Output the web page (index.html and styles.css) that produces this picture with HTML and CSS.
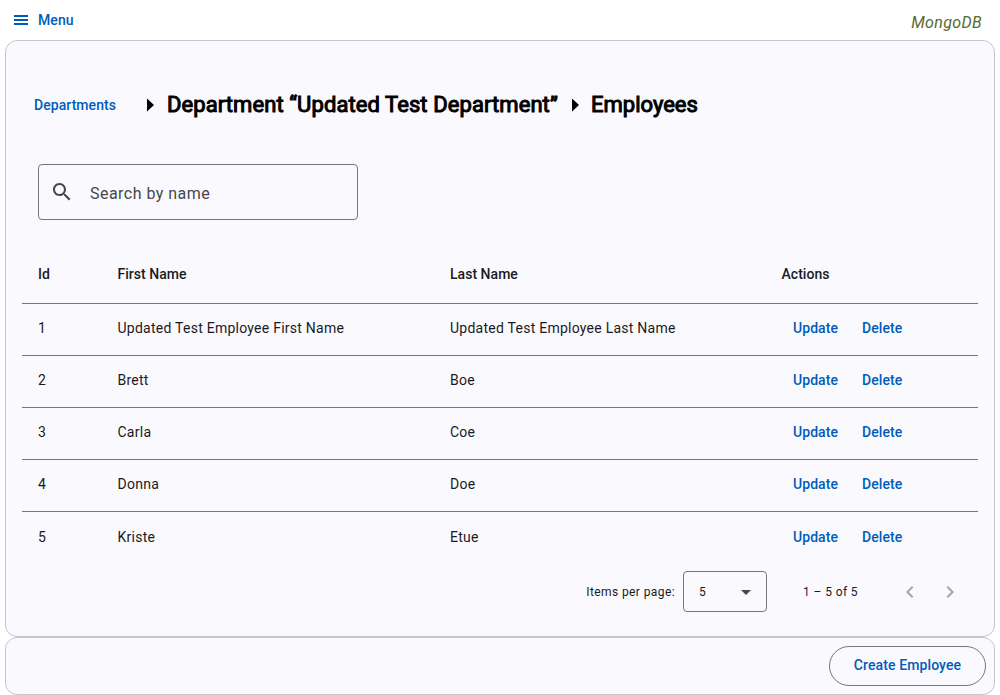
FILE: index.html
```html
<!DOCTYPE html>
<html lang="en">
<head>
<meta charset="utf-8">
<title>Employees</title>
<link rel="stylesheet" href="styles.css">
</head>
<body>
<header class="toolbar">
  <button class="menu-button">
    <svg class="menu-icon" viewBox="0 0 18 18"><path d="M2 4h14v2H2zM2 8h14v2H2zM2 12h14v2H2z"/></svg>
    <span>Menu</span>
  </button>
  <span class="database">MongoDB</span>
</header>
<main class="card">
  <h3 class="breadcrumb">
    <a class="link crumb-link">Departments</a>
    <svg class="crumb-arrow" viewBox="0 0 7 14"><path d="M0 0.5L7 7L0 13.5z"/></svg>
    <span class="crumb-title crumb-department">Department “Updated Test Department”</span>
    <svg class="crumb-arrow" viewBox="0 0 7 14"><path d="M0 0.5L7 7L0 13.5z"/></svg>
    <span class="crumb-title crumb-page">Employees</span>
  </h3>
  <label class="search">
    <svg class="search-icon" viewBox="0 0 24 24"><path d="M15.5 14h-.79l-.28-.27C15.41 12.59 16 11.11 16 9.5 16 5.91 13.09 3 9.5 3S3 5.91 3 9.5 5.91 16 9.5 16c1.61 0 3.09-.59 4.23-1.57l.27.28v.79l5 4.99L20.49 19l-4.99-5zm-6 0C7.01 14 5 11.99 5 9.5S7.01 5 9.5 5 14 7.01 14 9.5 11.99 14 9.5 14z"/></svg>
    <span class="search-label">Search by name</span>
  </label>
  <div class="table">
    <div class="row row-head"><span>Id</span><span>First Name</span><span>Last Name</span><span>Actions</span></div>
    <div class="row"><span>1</span><span>Updated Test Employee First Name</span><span>Updated Test Employee Last Name</span><span class="actions"><a class="link">Update</a><a class="link">Delete</a></span></div>
    <div class="row"><span>2</span><span>Brett</span><span>Boe</span><span class="actions"><a class="link">Update</a><a class="link">Delete</a></span></div>
    <div class="row"><span>3</span><span>Carla</span><span>Coe</span><span class="actions"><a class="link">Update</a><a class="link">Delete</a></span></div>
    <div class="row"><span>4</span><span>Donna</span><span>Doe</span><span class="actions"><a class="link">Update</a><a class="link">Delete</a></span></div>
    <div class="row row-last"><span>5</span><span>Kriste</span><span>Etue</span><span class="actions"><a class="link">Update</a><a class="link">Delete</a></span></div>
  </div>
  <div class="paginator">
    <span>Items per page:</span>
    <div class="page-size"><span>5</span><svg class="caret" viewBox="0 0 10 5"><path d="M0 0h10L5 5z"/></svg></div>
    <span class="range">1 – 5 of 5</span>
    <svg class="page-icon" viewBox="0 0 24 24"><path d="M15.41 7.41L14 6l-6 6 6 6 1.41-1.41L10.83 12z"/></svg>
    <svg class="page-icon" viewBox="0 0 24 24"><path d="M10 6L8.59 7.41 13.17 12l-4.58 4.59L10 18l6-6z"/></svg>
  </div>
</main>
<footer class="card-footer">
  <button class="create-button">Create Employee</button>
</footer>
</body>
</html>
```
FILE: styles.css
```css
* { box-sizing: border-box; }
body {
  margin: 0;
  height: 695px;
  padding: 0 5px;
  background: #fff;
  color: #1a1b1f;
  font-family: Roboto, "Liberation Sans", sans-serif;
  overflow: hidden;
}
svg { display: block; flex: none; fill: currentColor; }
button { border: 0; background: none; font: inherit; }
.toolbar {
  height: 40px;
  display: flex;
  align-items: center;
  justify-content: space-between;
  padding: 0 13px 0 7px;
}
.menu-button {
  display: flex;
  align-items: center;
  gap: 8px;
  padding: 0;
  color: #005cbb;
  font-size: 14px;
  font-weight: 500;
  letter-spacing: 0.1px;
}
.menu-icon { width: 18px; height: 18px; }
.database {
  color: #556b2f;
  font-size: 16px;
  font-style: italic;
  letter-spacing: 0.35px;
  padding-top: 4px;
}
.card, .card-footer {
  border: 1px solid #c4c6d0;
  border-radius: 12px;
  background: #faf9fd;
}
.card { height: 597px; padding: 0 16px; }
.breadcrumb {
  display: flex;
  align-items: center;
  height: 28px;
  margin: 50px 0 45px;
  padding-left: 12px;
  color: #000;
  font-size: 22px;
  font-weight: 400;
}
.crumb-title { -webkit-text-stroke: 1px #000; padding-bottom: 1px; }
.link {
  color: #005cbb;
  font-size: 14px;
  font-weight: 500;
  letter-spacing: 0.06px;
}
.crumb-link { width: 82px; margin-right: 31px; }
.crumb-arrow { width: 7px; height: 14px; }
.crumb-department { width: 392px; margin: 0 12.5px 0 13px; white-space: nowrap; letter-spacing: 0.08px; }
.crumb-page { margin-left: 12.5px; }
.search {
  display: flex;
  align-items: center;
  width: 320px;
  height: 56px;
  margin-left: 16px;
  padding-left: 11px;
  border: 1px solid #74777f;
  border-radius: 4px;
  color: #44474e;
}
.search-icon { width: 24px; height: 24px; }
.search-label {
  margin-left: 16px;
  padding-top: 2px;
  font-size: 16px;
  letter-spacing: 0.47px;
}
.table { margin-top: 28px; }
.row {
  display: grid;
  grid-template-columns: 79.5px 332.5px 331.5px 1fr;
  align-items: center;
  height: 52px;
  padding-left: 16px;
  padding-bottom: 4px;
  border-bottom: 1px solid #74777f;
  font-size: 14px;
  letter-spacing: 0.25px;
}
.row-head { height: 56px; font-weight: 500; letter-spacing: 0.03px; }
.row-last { border-bottom: 0; padding-bottom: 2px; }
.actions { display: flex; gap: 24px; padding-left: 11.5px; }
.paginator {
  display: flex;
  align-items: center;
  height: 56px;
  padding-right: 16px;
  justify-content: flex-end;
  font-size: 12px;
  letter-spacing: 0.4px;
}
.page-size {
  display: flex;
  align-items: center;
  justify-content: space-between;
  width: 84px;
  height: 41px;
  margin: -1px 36px 0 8px;
  padding: 1px 15px 0;
  border: 1px solid #74777f;
  border-radius: 4px;
}
.caret { width: 10px; height: 5px; color: #44474e; }
.range { margin-right: 40px; }
.page-icon { width: 24px; height: 24px; color: #a5a5a9; }
.page-icon + .page-icon { margin-left: 16px; }
.card-footer {
  height: 58px;
  display: flex;
  align-items: center;
  justify-content: flex-end;
  padding-right: 8px;
}
.create-button {
  width: 157px;
  height: 40px;
  padding: 0 0 2px;
  border: 1px solid #74777f;
  border-radius: 20px;
  color: #005cbb;
  font-size: 14px;
  font-weight: 500;
  letter-spacing: 0.1px;
}
```
